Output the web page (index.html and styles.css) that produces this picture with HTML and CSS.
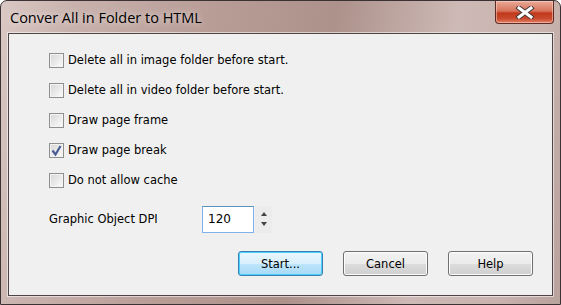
FILE: index.html
```html
<!DOCTYPE html>
<html lang="en">
<head>
    <meta charset="UTF-8">
    <title>Conver All in Folder to HTML</title>
    <link rel="stylesheet" href="styles.css">
</head>
<body>
    <div class="window">
        <div class="titlebar">
            <div class="caption">Conver All in Folder to HTML</div>
            <div class="close-btn">
                <svg width="20" height="13" viewBox="0 0 20 13">
                    <path d="M4 2 L16 11 M16 2 L4 11" stroke="#4a3c3c" stroke-width="5" stroke-linecap="square"/>
                    <path d="M4 2 L16 11 M16 2 L4 11" stroke="#fff" stroke-width="3" stroke-linecap="square"/>
                </svg>
            </div>
        </div>
        <div class="client">
            <div class="options">
                <label class="option"><span class="check"></span>Delete all in image folder before start.</label>
                <label class="option"><span class="check"></span>Delete all in video folder before start.</label>
                <label class="option"><span class="check"></span>Draw page frame</label>
                <label class="option"><span class="check checked">
                    <svg width="13" height="13" viewBox="0 0 13 13"><path d="M2.5 6.5 L5.5 10.5 L10.5 2" fill="none" stroke="#4b5d95" stroke-width="2.2"/></svg>
                </span>Draw page break</label>
                <label class="option"><span class="check"></span>Do not allow cache</label>
            </div>
            <div class="dpi-row">
                <div class="dpi-label">Graphic Object DPI</div>
                <div class="dpi-input">120</div>
                <div class="spinner">
                    <span class="arrow up"></span>
                    <span class="arrow down"></span>
                </div>
            </div>
            <div class="buttons">
                <div class="btn default">Start...</div>
                <div class="btn">Cancel</div>
                <div class="btn">Help</div>
            </div>
        </div>
    </div>
</body>
</html>
```

FILE: styles.css
```css
html,
body {
    margin: 0;
    background-color: #fff;
}

.window {
    width: 561px;
    height: 305px;
    box-sizing: border-box;
    display: flex;
    flex-direction: column;
    padding: 0 7px 8px 7px;
    border: 1px solid #3b3234;
    border-radius: 7px 7px 0 0;
    background: linear-gradient(100deg, #d9c8c4 0%, #c9b2ad 12%, #b89c96 35%, #ad918b 55%, #cdb9b5 75%, #c8b3ae 90%, #b9a19c 100%);
    font-family: "DejaVu Sans", Tahoma, sans-serif;
}

.titlebar {
    height: 32px;
    display: flex;
    align-items: flex-start;
    justify-content: space-between;
}

.caption {
    padding: 7px 0 0 2px;
    font-family: "Open Sans", sans-serif;
    font-size: 14.5px;
    color: #000;
    text-shadow: 0 0 6px rgba(255, 255, 255, 0.8);
}

.close-btn {
    width: 59px;
    height: 23px;
    margin-right: -1px;
    box-sizing: border-box;
    border: 1px solid #5e2b22;
    border-top: none;
    border-radius: 0 0 4px 4px;
    background: linear-gradient(#e9aa99 0%, #d8755c 45%, #c0391d 55%, #c94a2c 80%, #e5826a 100%);
    box-shadow: inset 0 0 0 1px rgba(255, 220, 210, 0.5);
    display: flex;
    align-items: center;
    justify-content: center;
}

.client {
    flex: 1;
    background-color: #f0f0f0;
    border: 1px solid #4d4446;
    box-shadow: 0 0 0 1px rgba(255, 255, 255, 0.55);
    padding: 11px 19px 0 40px;
    font-size: 11.5px;
    color: #000;
}

.option {
    height: 30px;
    display: flex;
    align-items: center;
    gap: 4px;
}

.check {
    width: 15px;
    height: 15px;
    box-sizing: border-box;
    border: 1px solid #8e8f8f;
    background: linear-gradient(135deg, #d6d6d6, #fdfdfd);
    box-shadow: inset 0 0 0 1px #f4f4f4;
    display: flex;
    align-items: center;
    justify-content: center;
}

.dpi-row {
    margin-top: 10px;
    height: 28px;
    display: flex;
    align-items: center;
}

.dpi-label {
    width: 153px;
}

.dpi-input {
    width: 52px;
    height: 27px;
    box-sizing: border-box;
    border: 1px solid #7eb4ea;
    border-top-color: #5794bf;
    background-color: #fff;
    padding: 5px 0 0 5px;
    font-size: 12px;
}

.spinner {
    width: 17px;
    height: 27px;
    margin-left: 1px;
    background-color: #ececec;
    display: flex;
    flex-direction: column;
    align-items: center;
    justify-content: space-around;
    padding: 3px 0;
    box-sizing: border-box;
}

.arrow {
    width: 0;
    height: 0;
    border-left: 3.5px solid transparent;
    border-right: 3.5px solid transparent;
}

.arrow.up {
    border-bottom: 4px solid #444;
}

.arrow.down {
    border-top: 4px solid #444;
}

.buttons {
    margin-top: 18px;
    display: flex;
    justify-content: flex-end;
    gap: 20px;
}

.btn {
    width: 85px;
    height: 25px;
    box-sizing: border-box;
    border: 1px solid #707070;
    border-radius: 3px;
    background: linear-gradient(#f2f2f2 0%, #ebebeb 50%, #dddddd 51%, #cfcfcf 100%);
    box-shadow: inset 0 0 0 1px #fcfcfc;
    display: flex;
    align-items: center;
    justify-content: center;
}

.btn.default {
    border-color: #3c7fb1;
    background: linear-gradient(#eaf6fd 0%, #d9f0fc 50%, #bee6fd 51%, #a7d9f5 100%);
    box-shadow: inset 0 0 0 1px #48d1fc;
}
```
